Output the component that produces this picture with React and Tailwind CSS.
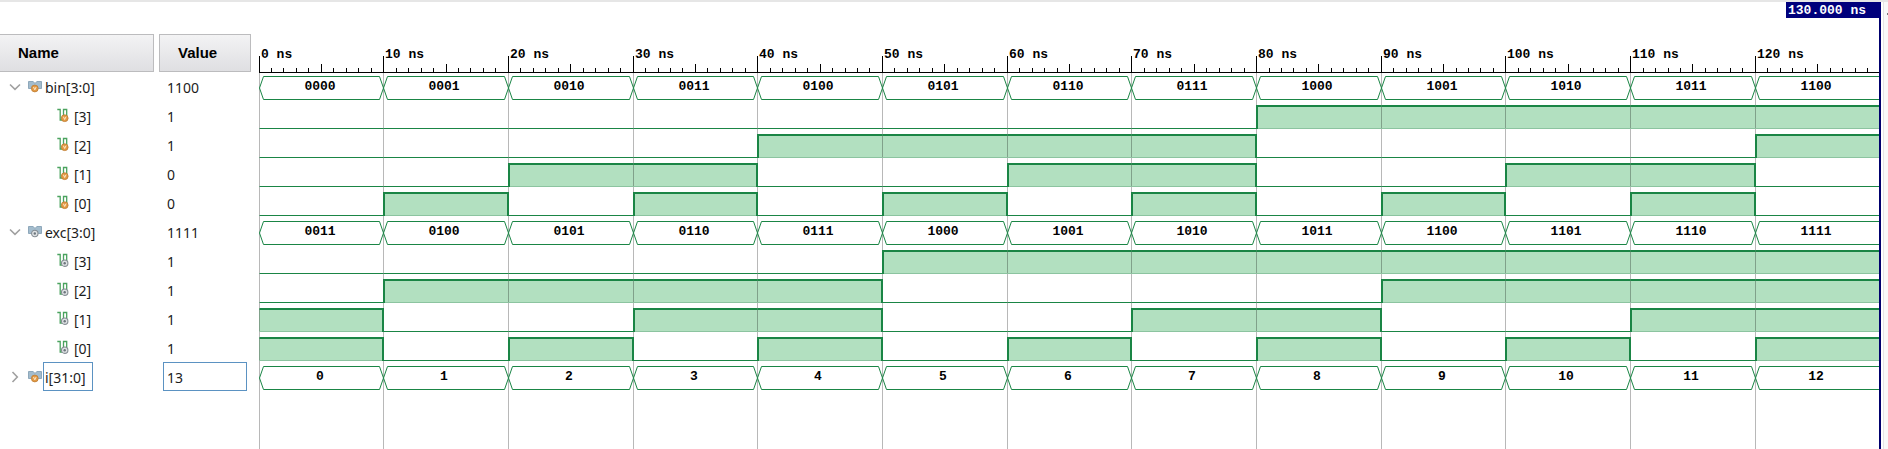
import { useLayoutEffect, useRef, useState } from "react";

const STEPS = 13;
const ROW = 29;
const TOP = 74;
const HIGH = 23;
const GREEN = "#1a8545";
const FONT = '"Liberation Mono", "Courier New", monospace';

const bits = (v, n) => Array.from({ length: STEPS }, (_, t) => ((v(t) >> n) & 1));
const bus = (v) => Array.from({ length: STEPS }, (_, t) => v(t).toString(2).padStart(4, "0"));
const bin = (t) => t;
const exc = (t) => t + 3;

const signals = [
  { name: "bin[3:0]", value: "1100", kind: "bus", open: true, variable: true, data: bus(bin) },
  ...[3, 2, 1, 0].map((n) => ({ name: `[${n}]`, value: String((12 >> n) & 1), kind: "bit", variable: true, data: bits(bin, n) })),
  { name: "exc[3:0]", value: "1111", kind: "bus", open: true, variable: false, data: bus(exc) },
  ...[3, 2, 1, 0].map((n) => ({ name: `[${n}]`, value: "1", kind: "bit", variable: false, data: bits(exc, n) })),
  { name: "i[31:0]", value: "13", kind: "bus", open: false, variable: true, selected: true, data: Array.from({ length: STEPS }, (_, t) => String(t)) },
];

function Badge({ cx, cy, variable }) {
  return variable ? (
    <g>
      <circle cx={cx} cy={cy} r="3.4" fill="#e39a45" stroke="#bd7c34" strokeWidth="0.8" />
      <path d={`M${cx - 1.3} ${cy - 1.5}l1.3 2.800 1.300-2.800`} fill="none" stroke="#fff0d8" strokeWidth="0.9" />
    </g>
  ) : (
    <g>
      <circle cx={cx} cy={cy} r="3.2" fill="#dfe2e4" stroke="#858d93" strokeWidth="1.1" />
      <circle cx={cx} cy={cy} r="1.2" fill="#6c757c" />
    </g>
  );
}

function BusIcon({ variable }) {
  return (
    <svg width="14" height="13" viewBox="0 0 14 13" aria-hidden="true" className="shrink-0">
      <path d="M.5 1.500h4.700L7 3.500l1.800-2h4.700v7h-3L9.500 9.500h-5L3.500 8.500h-3z" fill="#a3bccd" stroke="#86a2b6" strokeWidth="0.9" />
      <Badge cx={6.8} cy={8.500} variable={variable} />
    </svg>
  );
}

function BitIcon({ variable }) {
  return (
    <svg width="13" height="15" viewBox="0 0 13 15" aria-hidden="true" className="shrink-0">
      <path d="M.3 1.500h2.900v10.500h3.300V1.500h3.200V8" fill="none" stroke="#4ba35f" strokeWidth="1.300" />
      <Badge cx={7.700} cy={10.200} variable={variable} />
    </svg>
  );
}

function Chevron({ open }) {
  return (
    <svg width="12" height="12" viewBox="0 0 12 12" aria-hidden="true" fill="none" stroke="#a0a0a0" strokeWidth="1.6">
      <path d={open ? "M1 3.500l5 4.800 5-4.800" : "M3.500 1l4.800 5-4.800 5"} />
    </svg>
  );
}

function SignalRow({ signal }) {
  const box = signal.selected ? "border-[#5b92c2]" : "border-transparent";
  return (
    <tr className="h-[29px]">
      <td className="p-0">
        {signal.kind === "bus" ? (
          <div className="flex h-[29px] items-center pl-[9px]">
            <button type="button" aria-label={`Toggle ${signal.name}`} aria-expanded={signal.open} className="mr-[7px] block">
              <Chevron open={signal.open} />
            </button>
            <BusIcon variable={signal.variable} />
            <span className={`ml-px flex h-[29px] items-center border pl-px pr-[6px] pt-[2px] ${box}`}>{signal.name}</span>
          </div>
        ) : (
          <div className="flex h-[29px] items-center gap-1 pl-[57px]">
            <BitIcon variable={signal.variable} />
            <span className="pt-[2px]">{signal.name}</span>
          </div>
        )}
      </td>
      <td className="p-0" />
      <td className="p-0">
        <div className={`mx-1 flex h-[29px] items-center border pl-[3px] pt-[2px] ${box}`}>{signal.value}</div>
      </td>
    </tr>
  );
}

function BusWave({ data, y, at, width }) {
  const mid = y + HIGH / 2;
  return data.map((label, t) => {
    const a = at(t);
    const b = at(t + 1);
    const last = t === STEPS - 1;
    const d = last
      ? `M${width} ${y}H${a + 4}L${a} ${mid}L${a + 4} ${y + HIGH}H${width}`
      : `M${a} ${mid}L${a + 4} ${y}H${b - 4}L${b} ${mid}L${b - 4} ${y + HIGH}H${a + 4}Z`;
    return (
      <g key={t}>
        <path d={d} fill="none" stroke={GREEN} />
        <text x={Math.round((a + b) / 2) - 2} y={y + 13.5} textAnchor="middle">{label}</text>
      </g>
    );
  });
}

function BitFill({ data, y, at }) {
  return data.map((v, t) =>
    v ? <rect key={t} x={at(t) - 0.5} y={y} width={at(t + 1) - at(t)} height={HIGH} fill="#b2e0c0" /> : null
  );
}

function BitWave({ data, y, at }) {
  return data.map((v, t) => {
    const a = at(t);
    const b = at(t + 1);
    const edge = v ? a + 0.5 : a - 0.5;
    return (
      <g key={t}>
        {v ? (
          <>
            <path d={`M${a} ${y + HIGH}H${b}`} stroke="#8cc4a0" />
            <path d={`M${a} ${y + 0.5}H${b}`} stroke={GREEN} strokeWidth="2" />
          </>
        ) : (
          <path d={`M${a} ${y + HIGH}H${b}`} stroke={GREEN} />
        )}
        {t > 0 && data[t - 1] !== v && (
          <path d={`M${edge} ${y - 0.5}V${y + HIGH + 0.5}`} stroke={GREEN} strokeWidth="2" />
        )}
      </g>
    );
  });
}

function Waveform() {
  const ref = useRef(null);
  const [size, setSize] = useState({ w: 0, h: 0 });

  useLayoutEffect(() => {
    const el = ref.current;
    const measure = () => setSize({ w: el.clientWidth, h: el.clientHeight });
    measure();
    const observer = new ResizeObserver(measure);
    observer.observe(el);
    return () => observer.disconnect();
  }, []);

  const end = size.w - 2;
  const at = (t) => Math.floor(((size.w - 1) * t) / STEPS) + 0.5;
  const rowY = (r) => TOP + r * ROW + 0.5;
  const ticks = Array.from({ length: STEPS * 10 }, (_, i) => i);
  const tickTop = (i) => (i % 10 === 0 ? 54 : i % 5 === 0 ? 62 : 66);

  return (
    <div ref={ref} className="relative min-w-0 flex-1">
      <svg
        className="absolute inset-0"
        width={size.w}
        height={size.h}
        role="img"
        aria-label="Waveforms"
        fontFamily={FONT}
        fontSize="13"
        fontWeight="700"
      >
        {size.w > 0 && (
          <>
            {signals.map((s, r) => s.kind === "bit" && <BitFill key={r} data={s.data} y={rowY(r)} at={at} />)}
            {Array.from({ length: STEPS }, (_, t) => (
              <path key={t} d={`M${at(t)} 71V${size.h}`} stroke="#000" strokeOpacity="0.28" />
            ))}
            {ticks.map((i) => (
              <path key={i} d={`M${at(i / 10)} ${tickTop(i)}V70`} stroke="#000" />
            ))}
            <path d={`M0 70.5H${end}`} stroke="#000" />
            {Array.from({ length: STEPS }, (_, t) => (
              <text key={t} x={at(t) + 1.5} y="56">{`${t * 10} ns`}</text>
            ))}
            {signals.map((s, r) =>
              s.kind === "bus" ? (
                <BusWave key={r} data={s.data} y={rowY(r)} at={at} width={end} />
              ) : (
                <BitWave key={r} data={s.data} y={rowY(r)} at={at} />
              )
            )}
            <rect x={end} y="0" width="2" height={size.h} fill="#00006e" />
            <rect x={size.w - 95} y="0" width="95" height="16" fill="#00007c" />
            <text x={size.w - 93} y="12" fill="#fff">130.000 ns</text>
          </>
        )}
      </svg>
    </div>
  );
}

export default function App() {
  const th = "border border-[#bcbcbe] bg-gradient-to-b from-[#f3f3f4] to-[#dfdfe2] p-0 text-left font-['Liberation_Sans',Arial,sans-serif] text-[15px] font-bold";
  return (
    <main className="flex min-h-screen flex-col bg-white font-['Noto_Sans','Open_Sans',sans-serif] text-sm text-[#1c1c1c]">
      <div className="h-[2px] bg-[#e6e6e6]" />
      <div className="flex flex-1">
        <div className="w-[259px] shrink-0 pt-8">
          <table className="w-[251px] table-fixed border-separate border-spacing-0">
            <colgroup>
              <col className="w-[154px]" />
              <col className="w-[5px]" />
              <col className="w-[92px]" />
            </colgroup>
            <thead>
              <tr className="h-[38px] text-black">
                <th scope="col" className={`${th} border-l-0 pl-[18px]`}>Name</th>
                <td className="p-0" />
                <th scope="col" className={`${th} pl-[18px]`}>Value</th>
              </tr>
            </thead>
            <tbody>
              {signals.map((s, i) => (
                <SignalRow key={i} signal={s} />
              ))}
            </tbody>
          </table>
        </div>
        <Waveform />
        <div className="ml-[2px] w-[5px] shrink-0 border-l border-[#e4e4e4] bg-[#f9f9f9] pt-[11px]">
          <div className="ml-auto h-[2px] w-px bg-[#777777]" />
        </div>
      </div>
    </main>
  );
}
